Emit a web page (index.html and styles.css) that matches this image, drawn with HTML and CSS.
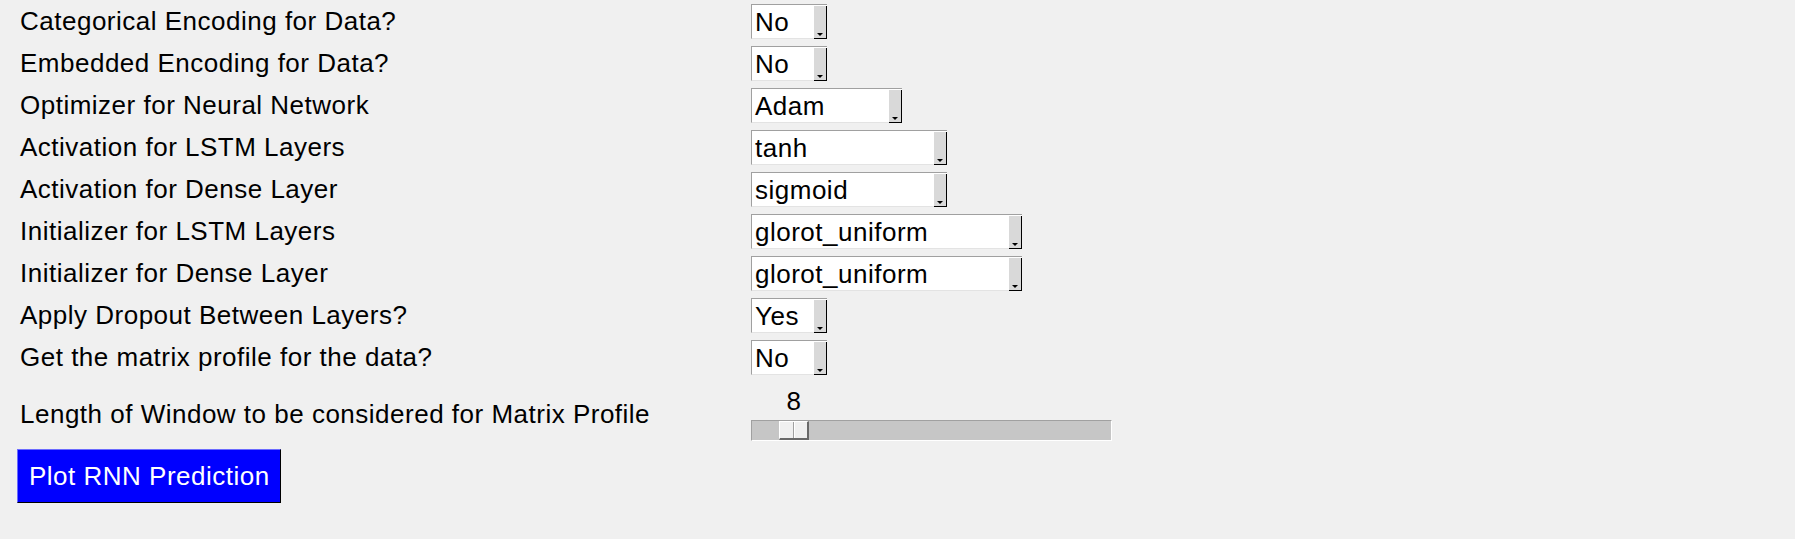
FILE: index.html
```html
<!DOCTYPE html>
<html>
<head>
<meta charset="utf-8">
<link rel="stylesheet" href="styles.css">
</head>
<body>
<div class="form">
  <div class="row"><div class="label">Categorical Encoding for Data?</div><div class="sel w76"><span class="val">No</span><span class="btn"><i class="arrow"></i></span></div></div>
  <div class="row"><div class="label">Embedded Encoding for Data?</div><div class="sel w76"><span class="val">No</span><span class="btn"><i class="arrow"></i></span></div></div>
  <div class="row"><div class="label">Optimizer for Neural Network</div><div class="sel w151"><span class="val">Adam</span><span class="btn"><i class="arrow"></i></span></div></div>
  <div class="row"><div class="label">Activation for LSTM Layers</div><div class="sel w196"><span class="val">tanh</span><span class="btn"><i class="arrow"></i></span></div></div>
  <div class="row"><div class="label">Activation for Dense Layer</div><div class="sel w196"><span class="val">sigmoid</span><span class="btn"><i class="arrow"></i></span></div></div>
  <div class="row"><div class="label">Initializer for LSTM Layers</div><div class="sel w271"><span class="val">glorot_uniform</span><span class="btn"><i class="arrow"></i></span></div></div>
  <div class="row"><div class="label">Initializer for Dense Layer</div><div class="sel w271"><span class="val">glorot_uniform</span><span class="btn"><i class="arrow"></i></span></div></div>
  <div class="row"><div class="label">Apply Dropout Between Layers?</div><div class="sel w76"><span class="val">Yes</span><span class="btn"><i class="arrow"></i></span></div></div>
  <div class="row"><div class="label">Get the matrix profile for the data?</div><div class="sel w76"><span class="val">No</span><span class="btn"><i class="arrow"></i></span></div></div>
  <div class="row scale-row">
    <div class="label">Length of Window to be considered for Matrix Profile</div>
    <div class="scale">
      <div class="scale-value">8</div>
      <div class="trough"><div class="thumb"><span class="grip"></span></div></div>
    </div>
  </div>
  <div class="action-row"><div class="action">Plot RNN Prediction</div></div>
</div>
</body>
</html>
```
FILE: styles.css
```css
html, body {
  margin: 0;
  padding: 0;
  background: #f0f0f0;
}
body {
  font-family: "Liberation Sans", Arial, sans-serif;
  font-size: 26px;
  letter-spacing: 0.5px;
  color: #000;
  width: 1795px;
  height: 539px;
  overflow: hidden;
}
.form {
  padding-top: 4px;
  display: flex;
  flex-direction: column;
  gap: 7px;
}
.row {
  display: flex;
  align-items: center;
  height: 35px;
}
.label {
  width: 751px;
  flex: none;
  box-sizing: border-box;
  padding-left: 20px;
  line-height: 29px;
  white-space: nowrap;
}
.sel {
  display: flex;
  height: 35px;
  box-sizing: border-box;
  border-top: 1px solid #a0a0a0;
  border-left: 1px solid #a0a0a0;
  border-bottom: 1px solid #e3e3e3;
  background: #fff;
}
.w76 { width: 76px; }
.w151 { width: 151px; }
.w196 { width: 196px; }
.w271 { width: 271px; }
.val {
  flex: 1;
  padding-left: 3px;
  padding-top: 3px;
  line-height: 29px;
  white-space: nowrap;
  overflow: hidden;
}
.btn {
  width: 13px;
  margin-top: 1px;
  box-sizing: border-box;
  background: #d9d9d9;
  border-right: 1px solid #000;
  border-bottom: 1px solid #000;
  display: flex;
  justify-content: center;
  align-items: flex-end;
  margin-bottom: -1px;
}
.arrow {
  display: block;
  width: 0;
  height: 0;
  border-left: 3px solid transparent;
  border-right: 3px solid transparent;
  border-top: 3px solid #000;
  margin-bottom: 2px;
}
.scale-row {
  height: 54px;
  margin-top: 5px;
}
.scale {
  display: flex;
  flex-direction: column;
  width: 361px;
}
.scale-value {
  margin-left: 28px;
  width: 30px;
  text-align: center;
  line-height: 29px;
}
.trough {
  margin-top: 4px;
  height: 21px;
  box-sizing: border-box;
  border-top: 1px solid #a0a0a0;
  border-left: 1px solid #a0a0a0;
  border-bottom: 1px solid #fff;
  border-right: 1px solid #fff;
  background: #c6c6c6;
  padding-left: 27px;
  display: flex;
}
.thumb {
  width: 30px;
  height: 19px;
  box-sizing: border-box;
  background: #f0f0f0;
  border-top: 1px solid #fff;
  border-left: 1px solid #fff;
  border-bottom: 2px solid #696969;
  border-right: 2px solid #696969;
  display: flex;
  justify-content: center;
}
.grip {
  width: 1px;
  border-left: 1px solid #a0a0a0;
  background: #fff;
}
.action-row {
  margin-top: 1px;
  padding-left: 17px;
  display: flex;
}
.action {
  height: 54px;
  box-sizing: border-box;
  padding: 0 10px 0 11px;
  background: #0000ff;
  color: #fff;
  border-top: 1px solid #6b6bff;
  border-left: 1px solid #6b6bff;
  border-bottom: 1px solid #000;
  border-right: 1px solid #000;
  line-height: 52px;
  white-space: nowrap;
}
```
